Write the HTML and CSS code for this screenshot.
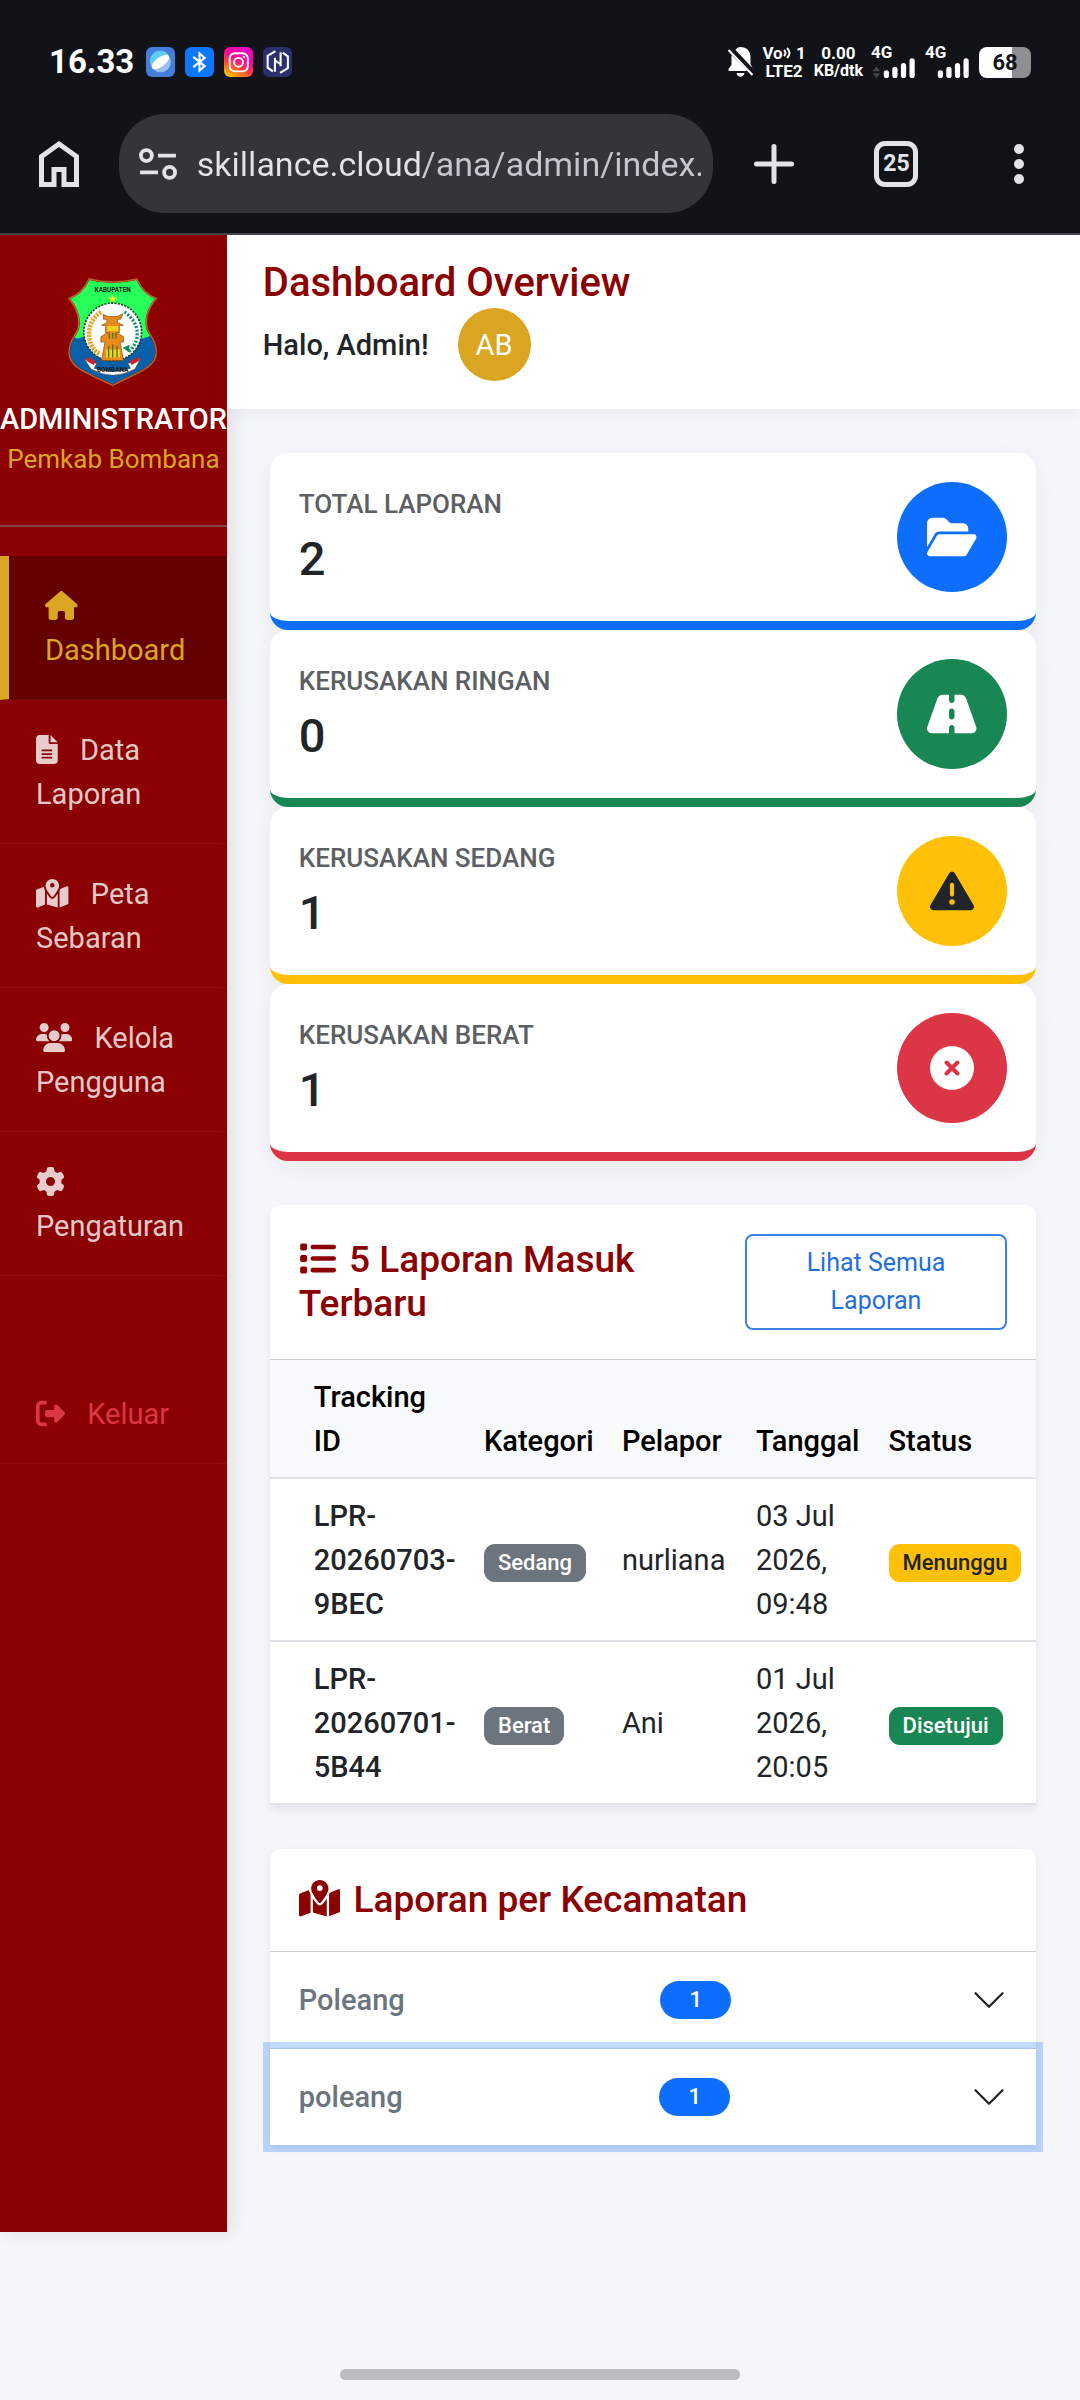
FILE: index.html
```html
<!DOCTYPE html>
<html lang="id">
<head>
    <meta charset="UTF-8">
    <meta name="viewport" content="width=device-width, initial-scale=1.0">
    <title>Dashboard Overview</title>
    <link rel="stylesheet" href="styles.css">
</head>
<body>
    <!-- Shared icons -->
    <svg class="sprite" aria-hidden="true">
        <symbol id="map-pin" viewBox="0 0 576 512"><path d="M408 120c0 54.6-73.1 151.9-105.2 192c-7.7 9.6-22 9.6-29.6 0C241.1 271.9 168 174.6 168 120C168 53.7 221.7 0 288 0s120 53.7 120 120zm8 80.4c3.5-6.9 6.7-13.8 9.6-20.6c.5-1.2 1-2.5 1.5-3.7l116-46.4C558.9 123.4 576 135 576 152l0 270.8c0 9.8-6 18.6-15.1 22.3L416 503l0-302.6zM137.6 138.3c2.4 14.1 7.2 28.3 12.8 41.5c2.9 6.8 6.1 13.7 9.6 20.6l0 251.4L32.9 502.7C17.1 509 0 497.4 0 480.4L0 209.6c0-9.8 6-18.6 15.1-22.3l122.6-49zM327.8 332c13.9-17.4 35.7-45.7 56.2-77l0 249.3L192 449.4 192 255c20.5 31.3 42.3 59.6 56.2 77c20.5 25.6 59.1 25.6 79.6 0zM288 152a40 40 0 1 0 0-80 40 40 0 1 0 0 80z"/></symbol>
        <symbol id="chevron" viewBox="0 0 16 16"><path d="M2 5l6 6 6-6" fill="none" stroke="#212529" stroke-linecap="round" stroke-linejoin="round"/></symbol>
    </svg>

    <div class="browser">
        <div class="status-bar">
            <span class="clock">16.33</span>
            <div class="notif-icons">
                <svg viewBox="0 0 28 29"><rect width="28" height="29" rx="6" fill="#4480db"/><circle cx="14" cy="14.500" r="10" fill="#9bbcf0"/><path d="M4 16A10 10 0 0 1 22 8z" fill="#5fcdf3"/><ellipse cx="14" cy="14.500" rx="10" ry="4.500" transform="rotate(-36 14 14.500)" fill="#fff"/></svg>
                <svg viewBox="0 0 28 29"><rect width="28" height="29" rx="6" fill="#0d78ff"/><path d="M8 9.500l11 9-5 4.500v-17l5 4.500-11 9" fill="none" stroke="#fff" stroke-width="2"/></svg>
                <svg viewBox="0 0 28 29">
                    <defs><linearGradient id="insta" x1="0.2" y1="1" x2="0.7" y2="0"><stop offset="0" stop-color="#ffc800"/><stop offset="0.3" stop-color="#ff5a2a"/><stop offset="0.6" stop-color="#ff0a90"/><stop offset="1" stop-color="#e800c8"/></linearGradient></defs>
                    <rect width="28" height="29" rx="6" fill="url(#insta)"/><rect x="5.500" y="6" width="17.500" height="17.500" rx="5" fill="none" stroke="#fff" stroke-width="1.800"/><circle cx="14" cy="14.800" r="4.300" fill="none" stroke="#fff" stroke-width="1.800"/><circle cx="19.200" cy="9.600" r="1.200" fill="#fff"/>
                </svg>
                <svg viewBox="0 0 28 29"><rect width="28" height="29" rx="6" fill="#2b2f6b"/><path d="M12 4L4.500 8.500V20l5 3.500M16.500 25l7.500-4.500V9l-5-3.500M11.500 10.500V24M17 5v13.500M11.500 13l5.500 3.500" fill="none" stroke="#fff" stroke-width="2"/></svg>
            </div>
            <div class="system-icons">
                <svg class="bell" viewBox="0 0 26 30"><path d="M13 0c6 0 10 4 10 10v7l2 4L8 3c1-2 3-3 5-3zM4 8l16 16H1v-2l3-4zM9 26h8c-1 5-7 5-8 0z" fill="#fff"/><path d="M1 3l24 25" stroke="#fff" stroke-width="2"/></svg>
                <span class="net"><span class="net-top">Vo<svg viewBox="0 0 9 12"><path d="M1 3q3 3 0 6M4 1q5 5 0 10" fill="none" stroke="#fff" stroke-width="2"/></svg>&nbsp;1</span><span>LTE2</span></span>
                <span class="net"><span>0.00</span><span class="net-unit">KB/dtk</span></span>
                <span class="signal"><b>4G</b>
                    <svg viewBox="0 0 45 21"><path d="M0 14l4-5 4 5zM0 16h8l-4 5z" fill="#44464c"/><path d="M14.500 15.500v3M23.500 12v6.500M32.500 8v10.500M41.500 3v15.500" stroke="#fff" stroke-width="5.500" stroke-linecap="round"/></svg>
                </span>
                <span class="signal"><b>4G</b>
                    <svg viewBox="0 0 45 21"><path d="M14.500 15.500v3M23.500 12v6.500M32.500 8v10.500M41.500 3v15.500" stroke="#fff" stroke-width="5.500" stroke-linecap="round"/></svg>
                </span>
                <span class="battery">68</span>
            </div>
        </div>
        <div class="toolbar">
            <button class="tool tool-home" type="button" aria-label="Home">
                <svg class="home-icon" viewBox="0 0 40 46"><path d="M2.500 43.500V15.500L20 3l17.500 12.500v28H25v-15H15v15z" fill="none" stroke="#e3e3e8" stroke-width="5"/></svg>
            </button>
            <div class="address">
                <svg viewBox="0 0 36 32"><g fill="none" stroke="#e3e3e8" stroke-width="3.600"><circle cx="7" cy="8" r="5.200"/><circle cx="29" cy="24" r="5.200"/><path d="M18 8h17M1 24h17"/></g></svg>
                <input type="text" aria-label="Address" value="skillance.cloud/ana/admin/index.">
            </div>
            <button class="tool" type="button" aria-label="New tab">
                <svg class="plus-icon" viewBox="0 0 40 40"><path d="M20 2.500v35M2.500 20h35" stroke="#e3e3e8" stroke-width="5" stroke-linecap="round"/></svg>
            </button>
            <button class="tool" type="button" aria-label="Tabs"><span class="tab-count">25</span></button>
            <button class="tool" type="button" aria-label="Menu">
                <svg class="dots-icon" viewBox="0 0 10 40"><g fill="#e3e3e8"><circle cx="5" cy="5" r="5"/><circle cx="5" cy="20" r="5"/><circle cx="5" cy="35" r="5"/></g></svg>
            </button>
        </div>
    </div>

    <div class="wrapper">
        <nav class="sidebar">
            <div class="brand">
                <svg class="emblem" viewBox="27 35 268 326" role="img" aria-label="Kabupaten Bombana">
                    <defs><clipPath id="shield"><path d="M90 40q70 18 142 0 20 45 58 58-38 45-27 90c6 20 26 30 27 70 0 50-70 65-130 99C100 325 30 310 30 258c1-40 22-50 27-70q10-45-27-90 40-15 60-58z"/></clipPath></defs>
                    <g clip-path="url(#shield)">
                        <path d="M20 30h280v190H20z" fill="#27ff5b"/>
                        <path d="M20 214q12-6 24 0t24 0 24 0 24 0 24 0 24 0 24 0 24 0 24 0 24 0 24 0 24 0v150H20z" fill="#0860a8"/>
                    </g>
                    <path d="M90 40q70 18 142 0 20 45 58 58-38 45-27 90c6 20 26 30 27 70 0 50-70 65-130 99C100 325 30 310 30 258c1-40 22-50 27-70q10-45-27-90 40-15 60-58z" fill="none" stroke="#7c3410" stroke-width="6"/>
                    <path d="M90 40q70 18 142 0 20 45 58 58-38 45-27 90c6 20 26 30 27 70 0 50-70 65-130 99C100 325 30 310 30 258c1-40 22-50 27-70q10-45-27-90 40-15 60-58z" fill="none" stroke="#d9622b" stroke-width="3"/>
                    <circle cx="160" cy="198" r="86" fill="#fff" stroke="#173c2c" stroke-width="5" stroke-dasharray="6 4"/>
                    <path d="M160 86l4 9h10l-8 6 3 10-9-6-9 6 3-10-8-6h10z" fill="#e8f02c"/>
                    <path d="M125 138q-40 30-35 75 5 35 30 50" fill="none" stroke="#dcab32" stroke-width="14" stroke-dasharray="7 3"/>
                    <path d="M195 138q38 28 38 65 0 35-28 55" fill="none" stroke="#159463" stroke-width="10" stroke-dasharray="6 5"/>
                    <path d="M190 245l20-9v24z" fill="#0c9060"/>
                    <path d="M132 145l14 7h28l16-8-6 16h-10v10l18 8h-12v22h-8l20 12v16h-10l10 55h-65l10-55h-12v-16l20-12h-6v-22h-12l16-8v-10h-10z" fill="#e98a1a" stroke="#7c4a10" stroke-width="2"/>
                    <path d="M143 180h34v16h-34zM140 250h42v24h-42z" fill="#f2d21f"/>
                    <path d="M150 200v18M160 200v18M170 200v18M148 240v34M160 235v39M173 240v34" stroke="#52760c" stroke-width="4"/>
                    <path d="M75 278l38 14-8 14q55 18 108 0l-8-14 38-14-16 30q-66 38-132 0z" fill="#fff" stroke="#333" stroke-width="2"/>
                    <path d="M82 272l28 12-6 12-22-12zM238 272l-28 12 6 12 22-12z" fill="#c9202a"/>
                    <text x="160" y="78" class="emblem-text">KABUPATEN</text>
                    <text x="160" y="316" class="emblem-text">BOMBANA</text>
                </svg>
                <h6>ADMINISTRATOR</h6>
                <small>Pemkab Bombana</small>
            </div>
            <a href="#" class="active"><svg class="icon" viewBox="0 0 576 512"><path d="M575.8 255.5c0 18-15 32.1-32 32.1l-32 0 .7 160.2c0 2.700-.2 5.400-.5 8.100l0 16.200c0 22.100-17.900 40-40 40l-16 0c-1.100 0-2.200 0-3.300-.1c-1.400 .1-2.800 .1-4.200 .1L416 512l-24 0c-22.100 0-40-17.900-40-40l0-24 0-64c0-17.700-14.300-32-32-32l-64 0c-17.700 0-32 14.300-32 32l0 64 0 24c0 22.100-17.900 40-40 40l-24 0-31.900 0c-1.500 0-3-.1-4.500-.2c-1.200 .1-2.400 .2-3.600 .2l-16 0c-22.100 0-40-17.900-40-40l0-112c0-.9 0-1.900 .1-2.800l0-69.700-32 0c-18 0-32-14-32-32.100c0-9 3-17 10-24L266.400 8c7-7 15-8 22-8s15 2 21 7L564.800 231.500c8 7 12 15 11 24z"/></svg> Dashboard</a>
            <a href="#"><svg class="icon" viewBox="0 0 384 512"><path fill-rule="evenodd" d="M64 0C28.700 0 0 28.700 0 64L0 448c0 35.300 28.700 64 64 64l256 0c35.300 0 64-28.700 64-64l0-288-128 0c-17.700 0-32-14.300-32-32L224 0 64 0zM256 0l0 128 128 0L256 0zM112 256l160 0c8.800 0 16 7.200 16 16s-7.200 16-16 16l-160 0c-8.800 0-16-7.200-16-16s7.200-16 16-16zm0 64l160 0c8.800 0 16 7.200 16 16s-7.200 16-16 16l-160 0c-8.800 0-16-7.200-16-16s7.200-16 16-16zm0 64l160 0c8.800 0 16 7.200 16 16s-7.200 16-16 16l-160 0c-8.800 0-16-7.200-16-16s7.200-16 16-16z"/></svg> Data Laporan</a>
            <a href="#"><svg class="icon" viewBox="0 0 576 512"><use href="#map-pin"/></svg> Peta Sebaran</a>
            <a href="#"><svg class="icon" viewBox="0 0 640 512"><path d="M144 0a80 80 0 1 1 0 160A80 80 0 1 1 144 0zM512 0a80 80 0 1 1 0 160A80 80 0 1 1 512 0zM0 298.700C0 239.800 47.800 192 106.700 192l42.700 0c15.900 0 31 3.500 44.600 9.700c-1.300 7.200-1.900 14.700-1.900 22.300c0 38.200 16.800 72.500 43.300 96c-.2 0-.4 0-.7 0L21.300 320C9.600 320 0 310.400 0 298.700zM405.300 320c-.2 0-.4 0-.7 0c26.600-23.500 43.300-57.800 43.300-96c0-7.600-.7-15-1.900-22.300c13.600-6.300 28.700-9.700 44.600-9.700l42.700 0C592.200 192 640 239.800 640 298.700c0 11.800-9.600 21.300-21.300 21.300l-213.300 0zM224 224a96 96 0 1 1 192 0 96 96 0 1 1 -192 0zM128 485.300C128 411.700 187.700 352 261.300 352l117.300 0C452.300 352 512 411.700 512 485.300c0 14.700-11.900 26.700-26.700 26.700l-330.700 0c-14.700 0-26.700-11.900-26.700-26.700z"/></svg> Kelola Pengguna</a>
            <a href="#"><svg class="icon" viewBox="0 0 512 512"><path d="M495.900 166.600c3.200 8.700 .5 18.400-6.400 24.600l-43.300 39.400c1.100 8.300 1.700 16.800 1.700 25.400s-.6 17.100-1.700 25.400l43.300 39.400c6.900 6.200 9.600 15.900 6.400 24.600c-4.400 11.900-9.700 23.300-15.800 34.300l-4.700 8.100c-6.600 11-14 21.400-22.100 31.200c-5.900 7.200-15.700 9.600-24.500 6.800l-55.700-17.700c-13.400 10.300-28.200 18.900-44 25.400l-12.500 57.100c-2 9.100-9 16.300-18.200 17.800c-13.800 2.300-28 3.500-42.500 3.500s-28.700-1.200-42.500-3.500c-9.200-1.500-16.200-8.700-18.200-17.800l-12.500-57.100c-15.800-6.500-30.600-15.100-44-25.400L83.100 425.900c-8.800 2.800-18.600 .3-24.500-6.800c-8.100-9.800-15.500-20.200-22.100-31.200l-4.700-8.100c-6.100-11-11.400-22.400-15.800-34.300c-3.200-8.700-.5-18.400 6.400-24.600l43.300-39.400C64.600 273.100 64 264.600 64 256s.6-17.100 1.700-25.400L22.400 191.200c-6.900-6.200-9.600-15.900-6.400-24.600c4.400-11.900 9.700-23.300 15.800-34.300l4.700-8.100c6.600-11 14-21.400 22.100-31.200c5.900-7.200 15.700-9.600 24.500-6.800l55.700 17.700c13.400-10.300 28.200-18.900 44-25.400l12.500-57.100c2-9.100 9-16.300 18.200-17.800C227.300 1.200 241.500 0 256 0s28.700 1.200 42.500 3.500c9.200 1.500 16.200 8.700 18.200 17.800l12.500 57.100c15.800 6.500 30.600 15.100 44 25.400l55.700-17.700c8.800-2.800 18.600-.3 24.500 6.800c8.100 9.800 15.500 20.200 22.100 31.200l4.700 8.100c6.100 11 11.400 22.400 15.800 34.300zM256 336a80 80 0 1 0 0-160 80 80 0 1 0 0 160z"/></svg> Pengaturan</a>
            <a href="#" class="logout"><svg class="icon" viewBox="0 0 512 512"><path d="M377.900 105.900L500.700 228.700c7.200 7.200 11.300 17.100 11.300 27.300s-4.100 20.100-11.300 27.300L377.900 406.100c-6.400 6.400-15 9.900-24 9.900c-18.700 0-33.900-15.200-33.900-33.900l0-62.100-128 0c-17.700 0-32-14.300-32-32l0-64c0-17.700 14.300-32 32-32l128 0 0-62.100c0-18.700 15.200-33.900 33.900-33.900c9 0 17.600 3.600 24 9.900zM160 96L96 96c-17.700 0-32 14.300-32 32l0 256c0 17.700 14.300 32 32 32l64 0c17.700 0 32 14.300 32 32s-14.300 32-32 32l-64 0c-53 0-96-43-96-96L0 128C0 75 43 32 96 32l64 0c17.700 0 32 14.300 32 32s-14.300 32-32 32z"/></svg> Keluar</a>
        </nav>

        <div class="main">
            <header class="topbar">
                <h1>Dashboard Overview</h1>
                <div class="user">
                    <span>Halo, Admin!</span>
                    <span class="avatar">AB</span>
                </div>
            </header>

            <div class="content">
                <section class="stats">
                    <div class="stat stat-primary">
                        <div><h6>TOTAL LAPORAN</h6><h3>2</h3></div>
                        <span class="stat-icon"><svg class="icon" viewBox="0 0 576 512"><path d="M88.700 223.800L0 375.800 0 96C0 60.700 28.700 32 64 32l117.500 0c17 0 33.300 6.700 45.300 18.700l26.500 26.500c12 12 28.300 18.700 45.300 18.700L416 96c35.300 0 64 28.700 64 64l0 32-336 0c-22.800 0-43.800 12.100-55.300 31.800zm27.600 16.100C122.100 230 132.600 224 144 224l400 0c11.500 0 22 6.100 27.700 16.100s5.700 22.200-.1 32.100l-112 192C453.900 474 443.400 480 432 480L32 480c-11.500 0-22-6.100-27.700-16.100s-5.700-22.200 .1-32.100l112-192z"/></svg></span>
                    </div>
                    <div class="stat stat-success">
                        <div><h6>KERUSAKAN RINGAN</h6><h3>0</h3></div>
                        <span class="stat-icon"><svg class="icon" viewBox="0 0 576 512"><path d="M256 32l-74.800 0c-27.100 0-51.300 17.100-60.300 42.600L3.100 407.200C1.100 413 0 419.200 0 425.400C0 455.500 24.500 480 54.600 480L256 480l0-64c0-17.700 14.300-32 32-32s32 14.300 32 32l0 64 201.400 0c30.200 0 54.600-24.500 54.600-54.600c0-6.200-1.100-12.400-3.100-18.200L455.100 74.600C446 49.100 421.900 32 394.800 32L320 32l0 64c0 17.700-14.300 32-32 32s-32-14.300-32-32l0-64zm64 192l0 64c0 17.700-14.300 32-32 32s-32-14.300-32-32l0-64c0-17.700 14.300-32 32-32s32 14.300 32 32z"/></svg></span>
                    </div>
                    <div class="stat stat-warning">
                        <div><h6>KERUSAKAN SEDANG</h6><h3>1</h3></div>
                        <span class="stat-icon"><svg class="icon" viewBox="0 0 512 512"><path d="M256 32c14.200 0 27.300 7.500 34.500 19.800l216 368c7.300 12.400 7.300 27.700 .2 40.100S486.300 480 472 480L40 480c-14.300 0-27.600-7.700-34.700-20.100s-7-27.800 .2-40.100l216-368C228.700 39.500 241.800 32 256 32zm0 128c-13.300 0-24 10.700-24 24l0 112c0 13.300 10.700 24 24 24s24-10.700 24-24l0-112c0-13.300-10.700-24-24-24zm32 224a32 32 0 1 0 -64 0 32 32 0 1 0 64 0z"/></svg></span>
                    </div>
                    <div class="stat stat-danger">
                        <div><h6>KERUSAKAN BERAT</h6><h3>1</h3></div>
                        <span class="stat-icon"><svg class="icon" viewBox="0 0 512 512"><path d="M256 512A256 256 0 1 0 256 0a256 256 0 1 0 0 512zM175 175c9.400-9.400 24.600-9.400 33.900 0l47 47 47-47c9.400-9.400 24.600-9.400 33.900 0s9.400 24.600 0 33.900l-47 47 47 47c9.400 9.400 9.400 24.600 0 33.900s-24.600 9.400-33.900 0l-47-47-47 47c-9.400 9.400-24.600 9.400-33.900 0s-9.400-24.600 0-33.900l47-47-47-47c-9.400-9.400-9.400-24.600 0-33.900z"/></svg></span>
                    </div>
                </section>

                <section class="panel">
                    <div class="panel-header">
                        <h5><svg class="icon" viewBox="0 0 512 512"><g><rect x="16" y="48" width="96" height="96" rx="24"/><rect x="16" y="208" width="96" height="96" rx="24"/><rect x="16" y="368" width="96" height="96" rx="24"/><rect x="160" y="64" width="352" height="64" rx="32"/><rect x="160" y="224" width="352" height="64" rx="32"/><rect x="160" y="384" width="352" height="64" rx="32"/></g></svg> 5 Laporan Masuk Terbaru</h5>
                        <a href="#" class="btn-outline">Lihat Semua Laporan</a>
                    </div>
                    <table>
                        <thead>
                            <tr>
                                <th class="col-id">Tracking ID</th>
                                <th class="col-kategori">Kategori</th>
                                <th class="col-pelapor">Pelapor</th>
                                <th class="col-tanggal">Tanggal</th>
                                <th>Status</th>
                            </tr>
                        </thead>
                        <tbody>
                            <tr>
                                <td class="code">LPR-20260703-9BEC</td>
                                <td><span class="badge">Sedang</span></td>
                                <td>nurliana</td>
                                <td>03 Jul 2026, 09:48</td>
                                <td><span class="badge badge-warning">Menunggu</span></td>
                            </tr>
                            <tr>
                                <td class="code">LPR-20260701-5B44</td>
                                <td><span class="badge">Berat</span></td>
                                <td>Ani</td>
                                <td>01 Jul 2026, 20:05</td>
                                <td><span class="badge badge-success">Disetujui</span></td>
                            </tr>
                        </tbody>
                    </table>
                </section>

                <section class="panel">
                    <div class="panel-header">
                        <h5><svg class="icon" viewBox="0 0 576 512"><use href="#map-pin"/></svg> Laporan per Kecamatan</h5>
                    </div>
                    <button type="button" class="accordion">
                        <span class="district">Poleang</span>
                        <span class="count">1</span>
                        <svg class="chevron"><use href="#chevron"/></svg>
                    </button>
                    <button type="button" class="accordion focused">
                        <span class="district">poleang</span>
                        <span class="count">1</span>
                        <svg class="chevron"><use href="#chevron"/></svg>
                    </button>
                </section>
            </div>
        </div>
    </div>

    <footer class="gesture-area"><span class="gesture-bar"></span></footer>
</body>
</html>
```
FILE: styles.css
```css
* {
    box-sizing: border-box;
}
body {
    margin: 0;
    min-height: 100vh;
    display: flex;
    flex-direction: column;
    font-family: Roboto, "Liberation Sans", sans-serif;
    font-size: 29px;
    line-height: 44px;
    color: #212529;
    background-color: #f4f6fa;
}
h1, h3, h5, h6 {
    margin: 0;
    font-weight: 500;
}
a {
    text-decoration: none;
}
button, input {
    font-family: inherit;
    border: none;
    padding: 0;
    background: none;
}
.sprite {
    position: absolute;
    width: 0;
    height: 0;
}
.icon {
    height: 1em;
    vertical-align: -0.125em;
    fill: currentColor;
}

/* Phone and browser bars */
.browser {
    background-color: #121318;
    border-bottom: 2px solid #46464a;
    color: #fff;
}
.status-bar {
    display: flex;
    align-items: center;
    height: 114px;
    padding: 10px 49px 0;
}
.clock {
    font-size: 33px;
    font-weight: 700;
    width: 97px;
}
.notif-icons {
    display: flex;
    gap: 10px;
}
.notif-icons svg {
    width: 29px;
    height: 30px;
}
.system-icons {
    display: flex;
    align-items: center;
    gap: 8px;
    margin-left: auto;
}
.bell {
    width: 27px;
    height: 30px;
}
.net {
    display: flex;
    flex-direction: column;
    align-items: center;
    font-size: 17px;
    font-weight: 700;
    line-height: 18px;
}
.net-top svg {
    width: 9px;
    height: 12px;
}
.net-unit {
    font-size: 16px;
}
.signal {
    width: 46px;
    height: 32px;
    display: flex;
    flex-direction: column;
}
.signal b {
    font-size: 17px;
    line-height: 12px;
}
.signal svg {
    width: 46px;
    height: 21px;
}
.battery {
    width: 52px;
    height: 31px;
    border-radius: 8px;
    background: linear-gradient(to right, #fff 64%, #8f8f92 64%);
    color: #121318;
    font-size: 22px;
    font-weight: 700;
    line-height: 32px;
    text-align: center;
}
.toolbar {
    display: flex;
    align-items: center;
    height: 119px;
    padding-bottom: 20px;
}
.tool {
    flex: 1;
    display: flex;
    align-items: center;
    justify-content: center;
}
.tool-home {
    flex: 0 0 11%;
}
.home-icon {
    width: 40px;
    height: 46px;
}
.plus-icon {
    width: 40px;
    height: 40px;
}
.dots-icon {
    width: 10px;
    height: 40px;
}
.tab-count {
    width: 44px;
    height: 46px;
    border: 5px solid #e3e3e8;
    border-radius: 11px;
    color: #e3e3e8;
    font-size: 23px;
    font-weight: 700;
    line-height: 36px;
    text-align: center;
}
.address {
    flex: 0 0 55%;
    display: flex;
    align-items: center;
    gap: 20px;
    height: 99px;
    padding: 0 12px 0 20px;
    border-radius: 46px;
    background-color: #34353a;
}
.address svg {
    flex: none;
    width: 38px;
    height: 34px;
}
.address input {
    flex: 1;
    min-width: 0;
    height: 60px;
    font-size: 34px;
    color: #e3e3e8;
    background: linear-gradient(to right, #e3e3e8 226px, #c5c6d0 226px);
    -webkit-background-clip: text;
    background-clip: text;
    -webkit-text-fill-color: transparent;
}

/* Layout */
.wrapper {
    flex: 1;
    display: flex;
}
.sidebar {
    flex: 0 0 21%;
    min-width: 0;
    color: #fff;
    background-color: #8b0000;
    box-shadow: 4px 0 18px rgba(0, 0, 0, 0.1);
}
.main {
    flex: 1;
    min-width: 0;
}

/* Sidebar */
.brand {
    display: flex;
    flex-direction: column;
    align-items: center;
    padding: 42px 0 44px;
    margin-bottom: 29px;
    border-bottom: 2px solid #82434a;
}
.emblem {
    width: 90px;
    height: 110px;
    margin-bottom: 15px;
}
.emblem-text {
    font-size: 19px;
    font-weight: 700;
    text-anchor: middle;
    fill: #1b1b1b;
}
.brand h6 {
    font-size: 29px;
    line-height: 35px;
}
.brand small {
    font-size: 26px;
    color: #daa520;
    white-space: nowrap;
}
.sidebar a {
    display: block;
    padding: 28px 36px 27px;
    border-bottom: 1px solid rgba(255, 255, 255, 0.05);
    color: rgba(255, 255, 255, 0.8);
}
.sidebar a .icon {
    margin-right: 15px;
}
.sidebar a.active {
    border-left: 9px solid #daa520;
    color: #daa520;
    background-color: #640000;
}
.sidebar a.logout {
    margin-top: 88px;
    color: #dc3545;
}

/* Header */
.topbar {
    position: relative;
    padding: 22px 36px 28px;
    background-color: #fff;
    box-shadow: 0 4px 18px rgba(0, 0, 0, 0.05);
}
.topbar h1 {
    font-size: 40px;
    line-height: 51px;
    color: #8b0000;
}
.user {
    display: flex;
    align-items: center;
    gap: 29px;
    font-weight: 500;
}
.avatar {
    width: 73px;
    height: 73px;
    border-radius: 50%;
    background-color: #daa520;
    color: #fff;
    font-weight: 400;
    line-height: 74px;
    text-align: center;
}

/* Summary cards */
.content {
    display: flex;
    flex-direction: column;
    gap: 44px;
    padding: 44px 44px 84px 43px;
}
.stat {
    display: flex;
    justify-content: space-between;
    padding: 29px;
    border-bottom: 9px solid;
    border-radius: 18px;
    background-color: #fff;
    box-shadow: 0 7px 28px rgba(0, 0, 0, 0.05);
}
.stat h6 {
    margin: 6px 0 15px;
    font-size: 26px;
    line-height: 32px;
    color: #5c6064;
}
.stat h3 {
    font-size: 47px;
    line-height: 48px;
    color: #212529;
}
.stat-icon {
    width: 110px;
    height: 110px;
    display: flex;
    align-items: center;
    justify-content: center;
    border-radius: 50%;
    color: #fff;
    font-size: 44px;
}
.stat-primary {
    border-color: #0d6efd;
}
.stat-primary .stat-icon {
    background-color: #0d6efd;
}
.stat-success {
    border-color: #198754;
}
.stat-success .stat-icon {
    background-color: #198754;
}
.stat-warning {
    border-color: #ffc107;
}
.stat-warning .stat-icon {
    background-color: #ffc107;
    color: #212529;
}
.stat-danger {
    border-color: #dc3545;
}
.stat-danger .stat-icon {
    background-color: #dc3545;
}

/* Panels */
.panel {
    border-radius: 10px 10px 0 0;
    background-color: #fff;
    box-shadow: 0 4px 8px rgba(0, 0, 0, 0.08);
}
.panel-header {
    display: flex;
    align-items: center;
    justify-content: space-between;
    padding: 29px;
    border-bottom: 1px solid #cfd0d2;
}
.panel-header h5 {
    flex: 1;
    font-size: 37px;
    color: #8b0000;
}
.panel-header .icon {
    margin-right: 4px;
}
.btn-outline {
    flex: 0 0 37%;
    padding: 8px 36px;
    border: 2px solid #3b82e6;
    border-radius: 8px;
    color: #1f6fe0;
    font-size: 25px;
    line-height: 38px;
    text-align: center;
}

/* Report table */
table {
    width: 100%;
    table-layout: fixed;
    border-collapse: collapse;
}
th, td {
    padding: 15px 0 14px 15px;
    border-bottom: 2px solid #dee2e6;
    text-align: left;
    font-weight: 400;
}
th {
    background-color: #f8f9fa;
    color: #000;
    font-weight: 500;
    vertical-align: bottom;
}
th:first-child, td:first-child {
    padding-left: 44px;
    padding-right: 10px;
}
.col-id {
    width: 26%;
}
.col-kategori {
    width: 18%;
}
.col-pelapor {
    width: 17.5%;
}
.col-tanggal {
    width: 17.3%;
}
.code {
    font-weight: 500;
}
.badge {
    display: inline-block;
    padding: 0 14px;
    border-radius: 11px;
    background-color: #6c757d;
    color: #fff;
    font-size: 22px;
    font-weight: 500;
    line-height: 38px;
}
.badge-warning {
    background-color: #ffc107;
    color: #212529;
}
.badge-success {
    background-color: #198754;
}

/* District list */
.accordion {
    position: relative;
    display: flex;
    align-items: center;
    justify-content: space-between;
    width: 100%;
    padding: 29px;
    border-bottom: 1px solid #dee2e6;
    background-color: #fff;
    color: #6c757d;
    font-size: 29px;
    font-weight: 500;
    line-height: 38px;
}
.accordion.focused {
    border-bottom: none;
    box-shadow: 0 0 0 7px rgba(13, 110, 253, 0.25);
}
.district {
    margin-right: 16px;
}
.count {
    width: 71px;
    border-radius: 19px;
    background-color: #0d6efd;
    color: #fff;
    font-size: 22px;
    text-align: center;
}
.chevron {
    width: 36px;
    height: 36px;
}

/* Gesture bar */
.gesture-area {
    display: flex;
    align-items: flex-end;
    justify-content: center;
    height: 168px;
    padding-bottom: 20px;
}
.gesture-bar {
    width: 37%;
    height: 11px;
    border-radius: 6px;
    background-color: #bbbcbf;
}
@media (max-width: 700px) {
    .content {
        padding: 20px;
    }
    table {
        table-layout: auto;
    }
}
```
